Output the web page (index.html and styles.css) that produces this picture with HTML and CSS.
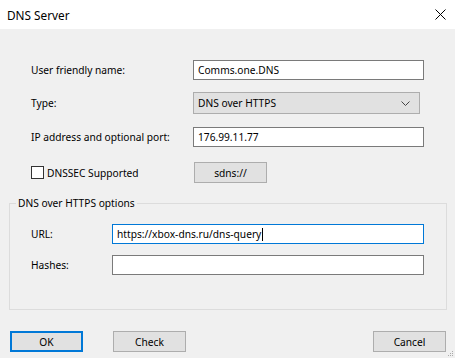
FILE: index.html
```html
<!DOCTYPE html>
<html>
<head>
<meta charset="utf-8">
<link rel="stylesheet" href="styles.css">
</head>
<body>
<div class="window">
  <div class="titlebar">
    <span class="title">DNS Server</span>
    <svg class="close" width="11" height="11" viewBox="0 0 11 11"><path d="M0.5 0.5L10.5 10.5M10.5 0.5L0.5 10.5" stroke="#000" stroke-width="1"/></svg>
  </div>
  <div class="body">
    <div class="form">
      <div class="row r1">
        <label class="lbl">User friendly name:</label>
        <div class="input">Comms.one.DNS</div>
      </div>
      <div class="row r2">
        <label class="lbl">Type:</label>
        <div class="select"><span>DNS over HTTPS</span>
          <svg width="9" height="5" viewBox="0 0 9 5"><path d="M0.5 0.5L4.5 4.5L8.5 0.5" fill="none" stroke="#444" stroke-width="1"/></svg>
        </div>
      </div>
      <div class="row r3">
        <label class="lbl">IP address and optional port:</label>
        <div class="input">176.99.11.77</div>
      </div>
      <div class="row r4">
        <label class="chk"><span class="box"></span>DNSSEC Supported</label>
        <div class="btn sdns">sdns://</div>
      </div>
    </div>
    <div class="group">
      <div class="legend">DNS over HTTPS options</div>
      <div class="grow g1">
        <label class="lbl">URL:</label>
        <div class="input wide focus">https://xbox-dns.ru/dns-query<span class="caret"></span></div>
      </div>
      <div class="grow g2">
        <label class="lbl">Hashes:</label>
        <div class="input wide"></div>
      </div>
    </div>
    <div class="buttons">
      <div class="btn ok">OK</div>
      <div class="btn check">Check</div>
      <div class="spacer"></div>
      <div class="btn cancel">Cancel</div>
    </div>
    <svg class="grip" width="6" height="6" viewBox="0 0 6 6"><rect x="4" y="0" width="1" height="1" fill="#aaa"/><rect x="2" y="2" width="1" height="1" fill="#aaa"/><rect x="4" y="2" width="1" height="1" fill="#aaa"/><rect x="0" y="4" width="1" height="1" fill="#aaa"/><rect x="2" y="4" width="1" height="1" fill="#aaa"/><rect x="4" y="4" width="1" height="1" fill="#aaa"/></svg>
  </div>
</div>
</body>
</html>
```
FILE: styles.css
```css
html, body { margin: 0; padding: 0; }
body {
  width: 455px; height: 358px; overflow: hidden;
  font-family: "Noto Sans", "DejaVu Sans", sans-serif;
  font-size: 10.2px; color: #000;
}
.window { width: 455px; height: 358px; display: flex; flex-direction: column; background: #f0f0f0; }
.titlebar {
  height: 29px; background: #fff; display: flex; align-items: center;
  justify-content: space-between; padding: 0 9px 0 7px; box-sizing: border-box;
}
.title { font-size: 11.8px; }
.close { margin-top: -1px; }
.body { position: relative; flex: 1; display: flex; flex-direction: column; }
.form { padding: 31px 0 0 31px; display: flex; flex-direction: column; }
.row { display: flex; align-items: center; }
.lbl { width: 162px; flex: none; }
.r2 { margin-top: 12px; }
.r3 { margin-top: 13px; }
.r4 { margin-top: 15px; }
.input {
  box-sizing: border-box; height: 20px; width: 231px; background: #fff;
  border: 1px solid #7a7a7a; padding: 0 4px; line-height: 18px; white-space: nowrap;
}
.input.focus { border-color: #0078d7; }
.caret { display: inline-block; width: 1px; height: 13px; background: #000; vertical-align: -3px; margin-left: 1px; }
.select {
  box-sizing: border-box; height: 22px; width: 227px; background: #e1e1e1;
  border: 1px solid #adadad; padding: 0 9px 0 4px; display: flex; align-items: center;
  justify-content: space-between;
}
.chk { width: 163px; flex: none; display: flex; align-items: center; }
.box { width: 13px; height: 13px; box-sizing: border-box; border: 1px solid #333; background: #fff; margin-right: 3px; }
.btn {
  box-sizing: border-box; height: 21px; width: 73px; background: #e1e1e1;
  border: 1px solid #adadad; display: flex; align-items: center; justify-content: center;
}
.group {
  margin: 20px 8px 0 9px; height: 107px; box-sizing: border-box;
  border: 1px solid #dcdcdc; position: relative; padding-top: 20px;
}
.legend { position: absolute; left: 6px; top: -8px; background: #f0f0f0; padding: 0 2px; }
.grow { display: flex; align-items: center; padding-left: 21px; }
.grow .lbl { width: 81px; }
.input.wide { width: 312px; }
.g2 { margin-top: 11px; }
.buttons { display: flex; padding: 0 9px 0 10px; margin-top: 21px; }
.check { margin-left: 30px; }
.spacer { flex: 1; }
.ok { border: 2px solid #0078d7; }
.grip { position: absolute; right: 1px; bottom: 1px; }
```
